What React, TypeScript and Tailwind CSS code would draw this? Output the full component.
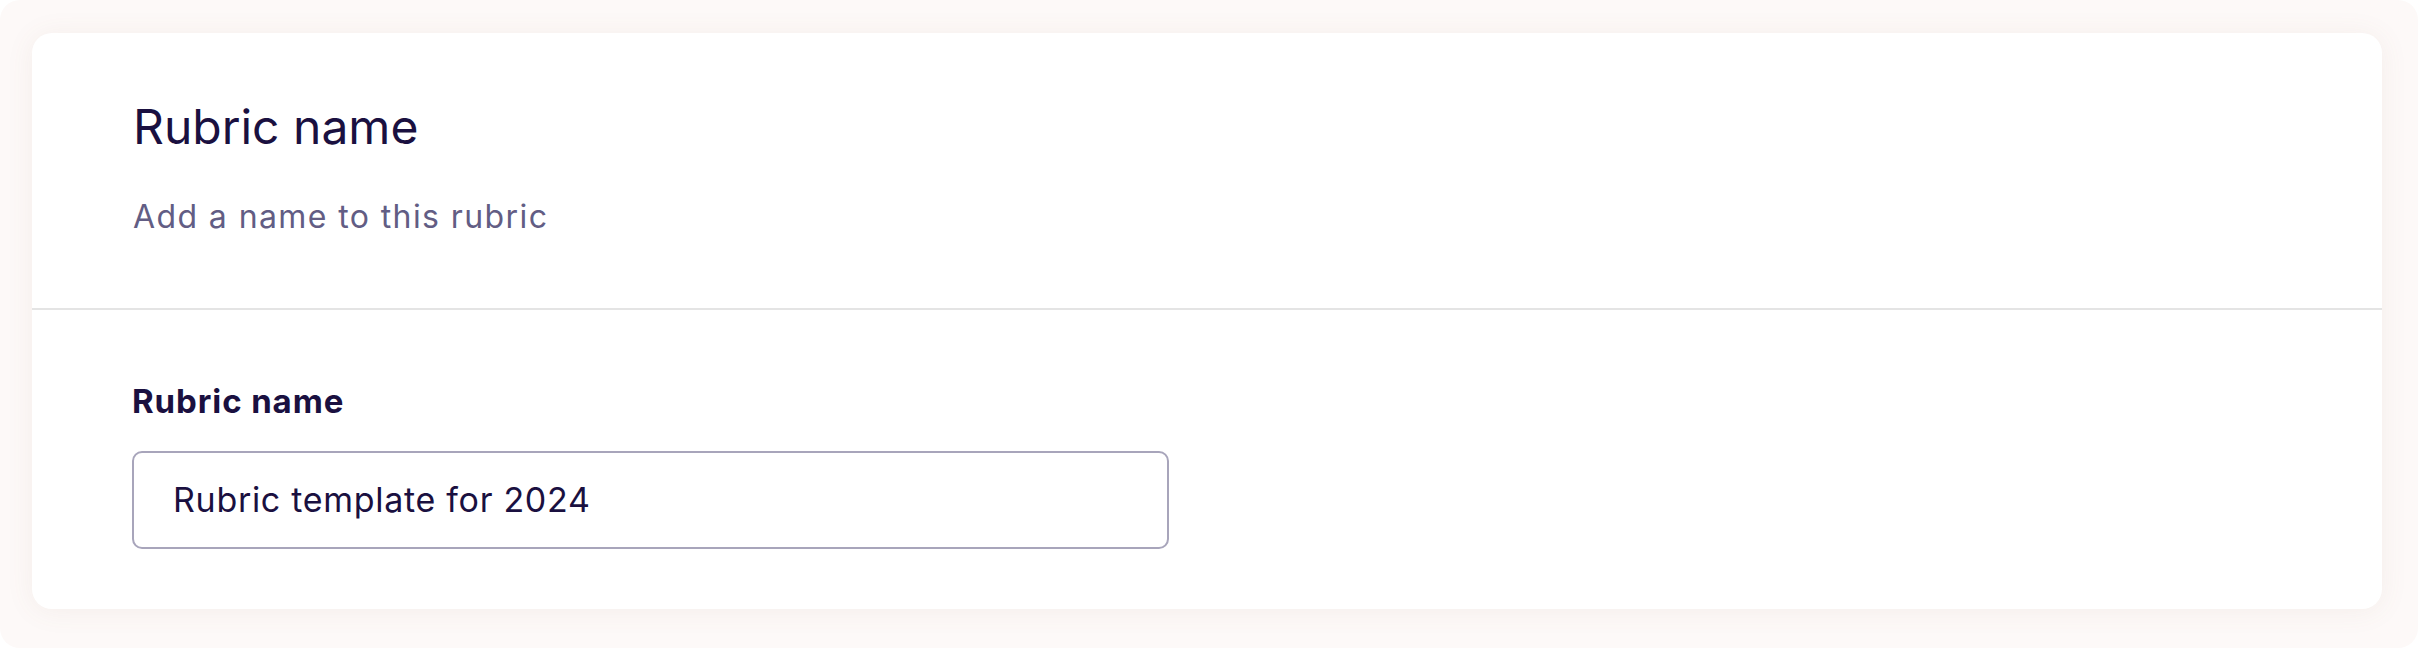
import React from "react";

export default function App() {
  return (
    <div className="w-[2418px] h-[648px] bg-white">
      <div
        className="w-full h-full rounded-[20px] bg-[#fdf9f8] pt-[33px] pl-[32px] pr-[36px] pb-[39px]"
        style={{ fontFamily: "Inter, 'Liberation Sans', sans-serif" }}
      >
        <div className="h-full bg-white rounded-[20px] shadow-[0_2px_28px_rgba(140,100,80,0.08)] flex flex-col">
          <div className="pl-[101px] pt-[70px] pb-[75px] border-b-2 border-[#e4e4e4]">
            <h1 className="text-[48px] leading-[48px] font-normal text-[#1a1040]">Rubric name</h1>
            <p className="mt-[50px] text-[32px] leading-[32px] tracking-[1.4px] text-[#625d84]">Add a name to this rubric</p>
          </div>
          <div className="pl-[100px] pt-[75px] pb-[60px]">
            <label className="block text-[33px] leading-[32px] font-bold tracking-[0.9px] text-[#1a1040]">Rubric name</label>
            <div className="mt-[34px] w-[1037px] h-[98px] border-2 border-[#a8a5bb] rounded-[10px] flex items-center pl-[39px]">
              <span className="text-[34px] leading-[34px] tracking-[0.7px] text-[#1a1040]">Rubric template for 2024</span>
            </div>
          </div>
        </div>
      </div>
    </div>
  );
}
